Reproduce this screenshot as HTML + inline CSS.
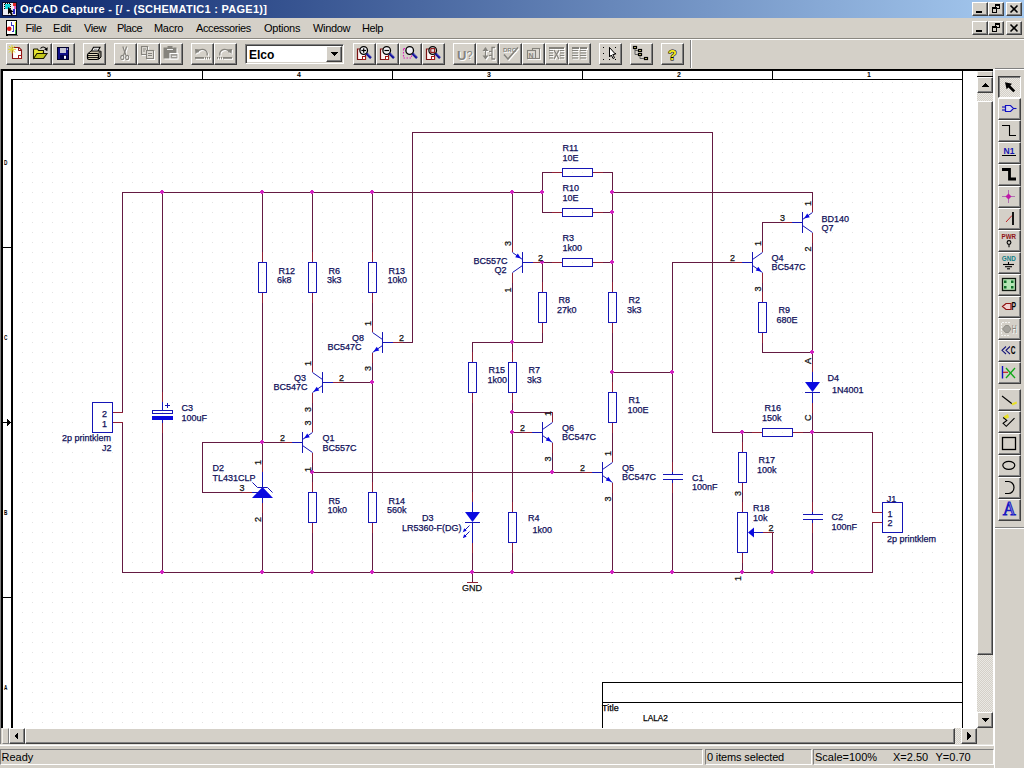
<!DOCTYPE html><html><head><meta charset="utf-8"><title>OrCAD Capture</title><style>
html,body{margin:0;padding:0;}
body{width:1024px;height:768px;overflow:hidden;background:#d4d0c8;position:relative;font-family:"Liberation Sans",sans-serif;font-size:11px;color:#000;}
div{position:absolute;box-sizing:border-box;}
.tb{left:0;top:0;width:1024px;height:18px;background:linear-gradient(to right,#0a246a,#a6caf0);}
.tt{left:20px;top:2px;color:#fff;font-weight:bold;font-size:11px;line-height:14px;white-space:nowrap;letter-spacing:0.28px;}
.mi{top:22px;line-height:13px;font-size:11px;white-space:nowrap;}
.btn{width:23px;height:22px;background:#d4d0c8;border:1px solid;border-color:#fff #404040 #404040 #fff;box-shadow:inset -1px -1px 0 #808080;}
.cb{width:16px;height:14px;background:#d4d0c8;border:1px solid;border-color:#fff #404040 #404040 #fff;box-shadow:inset -1px -1px 0 #808080;}
.sb{width:16px;height:16px;background:#d4d0c8;border:1px solid;border-color:#fff #404040 #404040 #fff;box-shadow:inset -1px -1px 0 #808080;}
.chk{background-color:#eae8e3;background-image:linear-gradient(45deg,#d4d0c8 25%,transparent 25%,transparent 75%,#d4d0c8 75%),linear-gradient(45deg,#d4d0c8 25%,transparent 25%,transparent 75%,#d4d0c8 75%);background-size:2px 2px;background-position:0 0,1px 1px;}
.sp{background:#d4d0c8;border:1px solid;border-color:#f4f2ee #808080 #808080 #f4f2ee;}
svg{position:absolute;left:0;top:0;}
.t{font-family:"Liberation Sans",sans-serif;font-size:9px;stroke-width:0.25px;}
.r{font-family:"Liberation Sans",sans-serif;font-size:7px;font-weight:bold;}
.st{top:750px;height:14px;line-height:14px;font-size:11px;white-space:nowrap;}
</style></head><body>
<div class="tb"></div>
<div class="tt">OrCAD Capture - [/ - (SCHEMATIC1 : PAGE1)]</div>
<div class="cb" style="left:972px;top:2px"></div>
<div class="cb" style="left:988px;top:2px"></div>
<div class="cb" style="left:1006px;top:2px"></div>
<div class="cb" style="left:972px;top:21px"></div>
<div class="cb" style="left:988px;top:21px"></div>
<div class="cb" style="left:1006px;top:21px"></div>
<div class="mi" style="left:25.5px;letter-spacing:-0.4px">File</div>
<div class="mi" style="left:53px;letter-spacing:-0.2px">Edit</div>
<div class="mi" style="left:84px;letter-spacing:-0.4px">View</div>
<div class="mi" style="left:117px;letter-spacing:-0.5px">Place</div>
<div class="mi" style="left:154px;letter-spacing:-0.3px">Macro</div>
<div class="mi" style="left:196px;letter-spacing:-0.4px">Accessories</div>
<div class="mi" style="left:264px;letter-spacing:-0.25px">Options</div>
<div class="mi" style="left:313px;letter-spacing:-0.35px">Window</div>
<div class="mi" style="left:362px;letter-spacing:-0.4px">Help</div>
<div style="left:0;top:38px;width:1024px;height:1px;background:#8a8780"></div>
<div style="left:0;top:39px;width:1024px;height:1px;background:#fff"></div>
<div class="btn" style="left:6px;top:43px"></div>
<div class="btn" style="left:29px;top:43px"></div>
<div class="btn" style="left:52px;top:43px"></div>
<div class="btn" style="left:83px;top:43px"></div>
<div class="btn" style="left:114px;top:43px"></div>
<div class="btn" style="left:137px;top:43px"></div>
<div class="btn" style="left:160px;top:43px"></div>
<div class="btn" style="left:191px;top:43px"></div>
<div class="btn" style="left:214px;top:43px"></div>
<div class="btn" style="left:353px;top:43px"></div>
<div class="btn" style="left:376px;top:43px"></div>
<div class="btn" style="left:399px;top:43px"></div>
<div class="btn" style="left:422px;top:43px"></div>
<div class="btn" style="left:453px;top:43px"></div>
<div class="btn" style="left:476px;top:43px"></div>
<div class="btn" style="left:499px;top:43px"></div>
<div class="btn" style="left:522px;top:43px"></div>
<div class="btn" style="left:545px;top:43px"></div>
<div class="btn" style="left:568px;top:43px"></div>
<div class="btn" style="left:599px;top:43px"></div>
<div class="btn" style="left:630px;top:43px"></div>
<div class="btn" style="left:661px;top:43px"></div>
<div style="left:245px;top:44px;width:99px;height:20px;background:#fff;border:1px solid;border-color:#808080 #fff #fff #808080;box-shadow:inset 1px 1px 0 #404040,inset -1px -1px 0 #d4d0c8"></div>
<div style="left:249px;top:48px;font-weight:bold;font-size:12px;line-height:14px">Elco</div>
<div class="sb" style="left:326px;top:46px"></div>
<div style="left:690px;top:40px;width:1px;height:28px;background:#808080"></div>
<div style="left:691px;top:40px;width:1px;height:28px;background:#fff"></div>
<div style="left:0;top:69px;width:1px;height:676px;background:#808080"></div>
<div style="left:1px;top:69px;width:976px;height:659px;background:#fff"></div>
<div style="left:1px;top:69px;width:992px;height:2px;background:#000"></div>
<div style="left:1px;top:69px;width:2px;height:659px;background:#000"></div>
<div class="chk" style="left:977px;top:71px;width:16px;height:657px"></div>
<div class="sp" style="left:977px;top:71px;width:16px;height:6px"></div>
<div class="sb" style="left:977px;top:77px"></div>
<div class="sb" style="left:977px;top:101px;height:554px"></div>
<div class="sb" style="left:977px;top:712px"></div>
<div class="chk" style="left:2px;top:728px;width:975px;height:16px"></div>
<div class="sp" style="left:2px;top:728px;width:7px;height:16px"></div>
<div class="sb" style="left:9px;top:728px"></div>
<div class="sb" style="left:25px;top:728px;width:930px"></div>
<div class="sb" style="left:961px;top:728px"></div>
<div style="left:977px;top:728px;width:16px;height:16px;background:#d4d0c8"></div>
<div style="left:0px;top:744px;width:994px;height:1px;background:#e4e2dc"></div>
<div style="left:0;top:745px;width:994px;height:1px;background:#fff"></div>
<div style="left:0px;top:749px;width:703px;height:16px;border:1px solid;border-color:#808080 #fff #fff #808080"></div>
<div style="left:705px;top:749px;width:107px;height:16px;border:1px solid;border-color:#808080 #fff #fff #808080"></div>
<div style="left:813px;top:749px;width:181px;height:16px;border:1px solid;border-color:#808080 #fff #fff #808080"></div>
<div class="st" style="left:1.5px">Ready</div>
<div class="st" style="left:707px;letter-spacing:-0.15px">0 items selected</div>
<div class="st" style="left:815px">Scale=100%</div>
<div class="st" style="left:893px">X=2.50</div>
<div class="st" style="left:935.5px">Y=0.70</div>
<div style="left:994px;top:69px;width:1px;height:699px;background:#fff"></div>
<div style="left:993px;top:69px;width:1px;height:677px;background:#fff"></div>
<div style="left:995px;top:68px;width:29px;height:1px;background:#808080"></div>
<div style="left:995px;top:69px;width:29px;height:1px;background:#fff"></div>
<div style="left:977px;top:76px;width:16px;height:1px;background:#000"></div>
<div style="left:995px;top:527px;width:29px;height:1px;background:#808080"></div>
<div style="left:995px;top:528px;width:29px;height:1px;background:#fff"></div>
<div class="btn chk" style="left:998px;top:76px;border-color:#404040 #fff #fff #404040;box-shadow:inset 1px 1px 0 #808080"></div>
<div class="btn" style="left:998px;top:98px"></div>
<div class="btn" style="left:998px;top:120px"></div>
<div class="btn" style="left:998px;top:142px"></div>
<div class="btn" style="left:998px;top:164px"></div>
<div class="btn" style="left:998px;top:186px"></div>
<div class="btn" style="left:998px;top:208px"></div>
<div class="btn" style="left:998px;top:230px"></div>
<div class="btn" style="left:998px;top:252px"></div>
<div class="btn" style="left:998px;top:274px"></div>
<div class="btn" style="left:998px;top:296px"></div>
<div class="btn" style="left:998px;top:318px"></div>
<div class="btn" style="left:998px;top:340px"></div>
<div class="btn" style="left:998px;top:362px"></div>
<div class="btn" style="left:998px;top:389px"></div>
<div class="btn" style="left:998px;top:411px"></div>
<div class="btn" style="left:998px;top:433px"></div>
<div class="btn" style="left:998px;top:455px"></div>
<div class="btn" style="left:998px;top:477px"></div>
<div class="btn" style="left:998px;top:499px"></div>
<svg width="1024" height="768" viewBox="0 0 1024 768" shape-rendering="crispEdges">
<defs><pattern id="g" x="0" y="0" width="10" height="10" patternUnits="userSpaceOnUse"><rect x="2" y="2" width="1" height="1" fill="#e2e2e2"/></pattern></defs>
<rect x="20" y="80" width="940" height="648" fill="url(#g)"/>
<rect x="11" y="79" width="2" height="649" fill="#000"/>
<rect x="11" y="79" width="952" height="1" fill="#000"/>
<rect x="962" y="71" width="1" height="657" fill="#000"/>
<rect x="202" y="71" width="1" height="8" fill="#000"/>
<rect x="392" y="71" width="1" height="8" fill="#000"/>
<rect x="582" y="71" width="1" height="8" fill="#000"/>
<rect x="772" y="71" width="1" height="8" fill="#000"/>
<rect x="3" y="247" width="8" height="1" fill="#000"/>
<rect x="3" y="422" width="8" height="1" fill="#000"/>
<rect x="3" y="597" width="8" height="1" fill="#000"/>
<polygon points="7,419 11,422.5 7,426" fill="#000"/>
<text x="109" y="77" class="r" text-anchor="middle">5</text>
<text x="299" y="77" class="r" text-anchor="middle">4</text>
<text x="489" y="77" class="r" text-anchor="middle">3</text>
<text x="679" y="77" class="r" text-anchor="middle">2</text>
<text x="869" y="77" class="r" text-anchor="middle">1</text>
<text x="5.7" y="165" class="r" text-anchor="middle" style="font-size:6.3px" textLength="3.4" lengthAdjust="spacingAndGlyphs">D</text>
<text x="5.7" y="340" class="r" text-anchor="middle" style="font-size:6.3px" textLength="3.4" lengthAdjust="spacingAndGlyphs">C</text>
<text x="5.7" y="515" class="r" text-anchor="middle" style="font-size:6.3px" textLength="3.4" lengthAdjust="spacingAndGlyphs">B</text>
<text x="5.7" y="690" class="r" text-anchor="middle" style="font-size:6.3px" textLength="3.4" lengthAdjust="spacingAndGlyphs">A</text>
<rect x="602" y="682" width="361" height="1" fill="#000"/>
<rect x="602" y="702" width="361" height="1" fill="#000"/>
<rect x="602" y="682" width="1" height="46" fill="#000"/>
<text x="602" y="711" class="t" fill="#000" stroke="#000">Title</text>
<text x="643" y="721" class="t" fill="#000" stroke="#000" textLength="25" lengthAdjust="spacingAndGlyphs">LALA2</text>
<g shape-rendering="auto">
<rect x="122" y="192" width="1" height="221" fill="#641a42"/>
<rect x="122" y="192" width="421" height="1" fill="#641a42"/>
<rect x="612" y="192" width="201" height="1" fill="#641a42"/>
<rect x="812" y="192" width="1" height="10" fill="#641a42"/>
<rect x="122" y="422" width="1" height="151" fill="#641a42"/>
<rect x="122" y="572" width="751" height="1" fill="#641a42"/>
<rect x="872" y="522" width="1" height="51" fill="#641a42"/>
<rect x="162" y="192" width="1" height="200" fill="#641a42"/>
<rect x="162" y="433" width="1" height="140" fill="#641a42"/>
<rect x="262" y="192" width="1" height="60" fill="#641a42"/>
<rect x="262" y="303" width="1" height="159" fill="#641a42"/>
<rect x="262" y="513" width="1" height="60" fill="#641a42"/>
<rect x="312" y="192" width="1" height="60" fill="#641a42"/>
<rect x="312" y="303" width="1" height="59" fill="#641a42"/>
<rect x="312" y="403" width="1" height="19" fill="#641a42"/>
<rect x="312" y="463" width="1" height="19" fill="#641a42"/>
<rect x="312" y="533" width="1" height="40" fill="#641a42"/>
<rect x="202" y="442" width="1" height="51" fill="#641a42"/>
<rect x="202" y="442" width="80" height="1" fill="#641a42"/>
<rect x="202" y="492" width="40" height="1" fill="#641a42"/>
<rect x="312" y="472" width="270" height="1" fill="#641a42"/>
<rect x="372" y="192" width="1" height="60" fill="#641a42"/>
<rect x="372" y="303" width="1" height="19" fill="#641a42"/>
<rect x="372" y="363" width="1" height="119" fill="#641a42"/>
<rect x="372" y="533" width="1" height="40" fill="#641a42"/>
<rect x="343" y="382" width="30" height="1" fill="#641a42"/>
<rect x="403" y="342" width="10" height="1" fill="#641a42"/>
<rect x="412" y="132" width="1" height="211" fill="#641a42"/>
<rect x="412" y="132" width="301" height="1" fill="#641a42"/>
<rect x="712" y="132" width="1" height="301" fill="#641a42"/>
<rect x="712" y="432" width="40" height="1" fill="#641a42"/>
<rect x="803" y="432" width="70" height="1" fill="#641a42"/>
<rect x="872" y="432" width="1" height="81" fill="#641a42"/>
<rect x="512" y="192" width="1" height="50" fill="#641a42"/>
<rect x="512" y="283" width="1" height="69" fill="#641a42"/>
<rect x="512" y="403" width="1" height="99" fill="#641a42"/>
<rect x="512" y="553" width="1" height="20" fill="#641a42"/>
<rect x="542" y="172" width="1" height="41" fill="#641a42"/>
<rect x="542" y="172" width="10" height="1" fill="#641a42"/>
<rect x="542" y="212" width="10" height="1" fill="#641a42"/>
<rect x="603" y="172" width="10" height="1" fill="#641a42"/>
<rect x="612" y="172" width="1" height="110" fill="#641a42"/>
<rect x="603" y="212" width="10" height="1" fill="#641a42"/>
<rect x="603" y="262" width="10" height="1" fill="#641a42"/>
<rect x="542" y="262" width="10" height="1" fill="#641a42"/>
<rect x="542" y="262" width="1" height="20" fill="#641a42"/>
<rect x="542" y="333" width="1" height="10" fill="#641a42"/>
<rect x="472" y="342" width="71" height="1" fill="#641a42"/>
<rect x="472" y="342" width="1" height="10" fill="#641a42"/>
<rect x="472" y="403" width="1" height="89" fill="#641a42"/>
<rect x="472" y="553" width="1" height="29" fill="#641a42"/>
<rect x="512" y="412" width="41" height="1" fill="#641a42"/>
<rect x="512" y="432" width="10" height="1" fill="#641a42"/>
<rect x="552" y="453" width="1" height="20" fill="#641a42"/>
<rect x="612" y="333" width="1" height="49" fill="#641a42"/>
<rect x="612" y="433" width="1" height="19" fill="#641a42"/>
<rect x="612" y="493" width="1" height="80" fill="#641a42"/>
<rect x="612" y="372" width="61" height="1" fill="#641a42"/>
<rect x="672" y="262" width="1" height="200" fill="#641a42"/>
<rect x="672" y="262" width="60" height="1" fill="#641a42"/>
<rect x="672" y="493" width="1" height="80" fill="#641a42"/>
<rect x="762" y="222" width="1" height="20" fill="#641a42"/>
<rect x="762" y="222" width="20" height="1" fill="#641a42"/>
<rect x="762" y="283" width="1" height="9" fill="#641a42"/>
<rect x="762" y="343" width="1" height="10" fill="#641a42"/>
<rect x="762" y="352" width="51" height="1" fill="#641a42"/>
<rect x="812" y="243" width="1" height="119" fill="#641a42"/>
<rect x="812" y="413" width="1" height="89" fill="#641a42"/>
<rect x="812" y="533" width="1" height="40" fill="#641a42"/>
<rect x="742" y="432" width="1" height="10" fill="#641a42"/>
<rect x="742" y="493" width="1" height="9" fill="#641a42"/>
<rect x="742" y="563" width="1" height="10" fill="#641a42"/>
<rect x="772" y="532" width="2" height="1" fill="#641a42"/>
<rect x="772" y="532" width="1" height="41" fill="#641a42"/>
<rect x="262" y="252" width="1" height="10" fill="#922034"/>
<rect x="262" y="293" width="1" height="10" fill="#922034"/>
<rect x="258.5" y="262.5" width="8" height="30" fill="none" stroke="#1515b6"/>
<rect x="312" y="252" width="1" height="10" fill="#922034"/>
<rect x="312" y="293" width="1" height="10" fill="#922034"/>
<rect x="308.5" y="262.5" width="8" height="30" fill="none" stroke="#1515b6"/>
<rect x="372" y="252" width="1" height="10" fill="#922034"/>
<rect x="372" y="293" width="1" height="10" fill="#922034"/>
<rect x="368.5" y="262.5" width="8" height="30" fill="none" stroke="#1515b6"/>
<rect x="312" y="482" width="1" height="10" fill="#922034"/>
<rect x="312" y="523" width="1" height="10" fill="#922034"/>
<rect x="308.5" y="492.5" width="8" height="30" fill="none" stroke="#1515b6"/>
<rect x="372" y="482" width="1" height="10" fill="#922034"/>
<rect x="372" y="523" width="1" height="10" fill="#922034"/>
<rect x="368.5" y="492.5" width="8" height="30" fill="none" stroke="#1515b6"/>
<rect x="542" y="282" width="1" height="10" fill="#922034"/>
<rect x="542" y="323" width="1" height="10" fill="#922034"/>
<rect x="538.5" y="292.5" width="8" height="30" fill="none" stroke="#1515b6"/>
<rect x="612" y="282" width="1" height="10" fill="#922034"/>
<rect x="612" y="323" width="1" height="10" fill="#922034"/>
<rect x="608.5" y="292.5" width="8" height="30" fill="none" stroke="#1515b6"/>
<rect x="472" y="352" width="1" height="10" fill="#922034"/>
<rect x="472" y="393" width="1" height="10" fill="#922034"/>
<rect x="468.5" y="362.5" width="8" height="30" fill="none" stroke="#1515b6"/>
<rect x="512" y="352" width="1" height="10" fill="#922034"/>
<rect x="512" y="393" width="1" height="10" fill="#922034"/>
<rect x="508.5" y="362.5" width="8" height="30" fill="none" stroke="#1515b6"/>
<rect x="612" y="382" width="1" height="10" fill="#922034"/>
<rect x="612" y="423" width="1" height="10" fill="#922034"/>
<rect x="608.5" y="392.5" width="8" height="30" fill="none" stroke="#1515b6"/>
<rect x="512" y="502" width="1" height="10" fill="#922034"/>
<rect x="512" y="543" width="1" height="10" fill="#922034"/>
<rect x="508.5" y="512.5" width="8" height="30" fill="none" stroke="#1515b6"/>
<rect x="762" y="292" width="1" height="10" fill="#922034"/>
<rect x="762" y="333" width="1" height="10" fill="#922034"/>
<rect x="758.5" y="302.5" width="8" height="30" fill="none" stroke="#1515b6"/>
<rect x="742" y="442" width="1" height="10" fill="#922034"/>
<rect x="742" y="483" width="1" height="10" fill="#922034"/>
<rect x="738.5" y="452.5" width="8" height="30" fill="none" stroke="#1515b6"/>
<rect x="552" y="172" width="10" height="1" fill="#922034"/>
<rect x="593" y="172" width="10" height="1" fill="#922034"/>
<rect x="562.5" y="168.5" width="30" height="8" fill="none" stroke="#1515b6"/>
<rect x="552" y="212" width="10" height="1" fill="#922034"/>
<rect x="593" y="212" width="10" height="1" fill="#922034"/>
<rect x="562.5" y="208.5" width="30" height="8" fill="none" stroke="#1515b6"/>
<rect x="552" y="262" width="10" height="1" fill="#922034"/>
<rect x="593" y="262" width="10" height="1" fill="#922034"/>
<rect x="562.5" y="258.5" width="30" height="8" fill="none" stroke="#1515b6"/>
<rect x="752" y="432" width="10" height="1" fill="#922034"/>
<rect x="793" y="432" width="10" height="1" fill="#922034"/>
<rect x="762.5" y="428.5" width="30" height="8" fill="none" stroke="#1515b6"/>
<rect x="382" y="332" width="1" height="21" fill="#1515b6"/>
<line x1="382.5" y1="339.5" x2="372.5" y2="332.5" stroke="#1515b6" stroke-width="1"/>
<line x1="382.5" y1="345.5" x2="372.5" y2="352.5" stroke="#1515b6" stroke-width="1"/>
<rect x="382" y="342" width="11" height="1" fill="#1515b6"/>
<rect x="393" y="342" width="10" height="1" fill="#922034"/>
<rect x="372" y="322" width="1" height="10" fill="#922034"/>
<rect x="372" y="353" width="1" height="10" fill="#922034"/>
<polygon points="373.5,351.8 376.7,346.8 379.3,350.5" fill="#0a0ae0"/>
<rect x="322" y="372" width="1" height="21" fill="#1515b6"/>
<line x1="322.5" y1="379.5" x2="312.5" y2="372.5" stroke="#1515b6" stroke-width="1"/>
<line x1="322.5" y1="385.5" x2="312.5" y2="392.5" stroke="#1515b6" stroke-width="1"/>
<rect x="322" y="382" width="11" height="1" fill="#1515b6"/>
<rect x="333" y="382" width="10" height="1" fill="#922034"/>
<rect x="312" y="362" width="1" height="10" fill="#922034"/>
<rect x="312" y="393" width="1" height="10" fill="#922034"/>
<polygon points="313.5,391.8 316.7,386.8 319.3,390.5" fill="#0a0ae0"/>
<rect x="302" y="432" width="1" height="21" fill="#1515b6"/>
<line x1="302.5" y1="439.5" x2="312.5" y2="432.5" stroke="#1515b6" stroke-width="1"/>
<line x1="302.5" y1="445.5" x2="312.5" y2="452.5" stroke="#1515b6" stroke-width="1"/>
<rect x="292" y="442" width="11" height="1" fill="#1515b6"/>
<rect x="282" y="442" width="10" height="1" fill="#922034"/>
<rect x="312" y="422" width="1" height="10" fill="#922034"/>
<rect x="312" y="453" width="1" height="10" fill="#922034"/>
<polygon points="304.0,438.5 307.2,433.5 309.8,437.2" fill="#0a0ae0"/>
<rect x="522" y="252" width="1" height="21" fill="#1515b6"/>
<line x1="522.5" y1="259.5" x2="512.5" y2="252.5" stroke="#1515b6" stroke-width="1"/>
<line x1="522.5" y1="265.5" x2="512.5" y2="272.5" stroke="#1515b6" stroke-width="1"/>
<rect x="522" y="262" width="11" height="1" fill="#1515b6"/>
<rect x="533" y="262" width="10" height="1" fill="#922034"/>
<rect x="512" y="242" width="1" height="10" fill="#922034"/>
<rect x="512" y="273" width="1" height="10" fill="#922034"/>
<polygon points="521.0,258.5 515.2,257.2 517.8,253.5" fill="#0a0ae0"/>
<rect x="542" y="422" width="1" height="21" fill="#1515b6"/>
<line x1="542.5" y1="429.5" x2="552.5" y2="422.5" stroke="#1515b6" stroke-width="1"/>
<line x1="542.5" y1="435.5" x2="552.5" y2="442.5" stroke="#1515b6" stroke-width="1"/>
<rect x="532" y="432" width="11" height="1" fill="#1515b6"/>
<rect x="522" y="432" width="10" height="1" fill="#922034"/>
<rect x="552" y="412" width="1" height="10" fill="#922034"/>
<rect x="552" y="443" width="1" height="10" fill="#922034"/>
<polygon points="551.5,441.8 545.7,440.5 548.3,436.8" fill="#0a0ae0"/>
<rect x="602" y="462" width="1" height="21" fill="#1515b6"/>
<line x1="602.5" y1="469.5" x2="612.5" y2="462.5" stroke="#1515b6" stroke-width="1"/>
<line x1="602.5" y1="475.5" x2="612.5" y2="482.5" stroke="#1515b6" stroke-width="1"/>
<rect x="592" y="472" width="11" height="1" fill="#1515b6"/>
<rect x="582" y="472" width="10" height="1" fill="#922034"/>
<rect x="612" y="452" width="1" height="10" fill="#922034"/>
<rect x="612" y="483" width="1" height="10" fill="#922034"/>
<polygon points="611.5,481.8 605.7,480.5 608.3,476.8" fill="#0a0ae0"/>
<rect x="752" y="252" width="1" height="21" fill="#1515b6"/>
<line x1="752.5" y1="259.5" x2="762.5" y2="252.5" stroke="#1515b6" stroke-width="1"/>
<line x1="752.5" y1="265.5" x2="762.5" y2="272.5" stroke="#1515b6" stroke-width="1"/>
<rect x="742" y="262" width="11" height="1" fill="#1515b6"/>
<rect x="732" y="262" width="10" height="1" fill="#922034"/>
<rect x="762" y="242" width="1" height="10" fill="#922034"/>
<rect x="762" y="273" width="1" height="10" fill="#922034"/>
<polygon points="761.5,271.8 755.7,270.5 758.3,266.8" fill="#0a0ae0"/>
<rect x="802" y="212" width="1" height="21" fill="#1515b6"/>
<line x1="802.5" y1="219.5" x2="812.5" y2="212.5" stroke="#1515b6" stroke-width="1"/>
<line x1="802.5" y1="225.5" x2="812.5" y2="232.5" stroke="#1515b6" stroke-width="1"/>
<rect x="792" y="222" width="11" height="1" fill="#1515b6"/>
<rect x="782" y="222" width="10" height="1" fill="#922034"/>
<rect x="812" y="202" width="1" height="10" fill="#922034"/>
<rect x="812" y="233" width="1" height="10" fill="#922034"/>
<polygon points="804.0,218.5 807.2,213.5 809.8,217.2" fill="#0a0ae0"/>
<rect x="92.5" y="402.5" width="20" height="30" fill="none" stroke="#1515b6"/>
<rect x="113" y="412" width="10" height="1" fill="#922034"/>
<rect x="113" y="422" width="10" height="1" fill="#922034"/>
<rect x="882.5" y="502.5" width="20" height="30" fill="none" stroke="#1515b6"/>
<rect x="872" y="512" width="10" height="1" fill="#922034"/>
<rect x="872" y="522" width="10" height="1" fill="#922034"/>
<rect x="162" y="392" width="1" height="10" fill="#922034"/>
<rect x="162" y="402" width="1" height="8" fill="#1515b6"/>
<rect x="152.5" y="410.5" width="20" height="3" fill="none" stroke="#1515b6"/>
<rect x="152" y="416" width="21" height="4" fill="#0a0ae0"/>
<rect x="162" y="420" width="1" height="3" fill="#1515b6"/>
<rect x="162" y="423" width="1" height="10" fill="#922034"/>
<rect x="165" y="405" width="5" height="1" fill="#1515b6"/>
<rect x="167" y="403" width="1" height="5" fill="#1515b6"/>
<rect x="672" y="462" width="1" height="10" fill="#922034"/>
<rect x="672" y="472" width="1" height="3" fill="#1515b6"/>
<rect x="663" y="474" width="20" height="1" fill="#1515b6"/>
<rect x="663" y="479" width="20" height="1" fill="#1515b6"/>
<rect x="672" y="479" width="1" height="4" fill="#1515b6"/>
<rect x="672" y="483" width="1" height="10" fill="#922034"/>
<rect x="812" y="502" width="1" height="10" fill="#922034"/>
<rect x="812" y="512" width="1" height="3" fill="#1515b6"/>
<rect x="803" y="514" width="20" height="1" fill="#1515b6"/>
<rect x="803" y="519" width="20" height="1" fill="#1515b6"/>
<rect x="812" y="519" width="1" height="4" fill="#1515b6"/>
<rect x="812" y="523" width="1" height="10" fill="#922034"/>
<rect x="812" y="362" width="1" height="10" fill="#922034"/>
<rect x="812" y="372" width="1" height="11" fill="#1515b6"/>
<polygon points="805,382 820,382 812.5,392" fill="#0a0ae0"/>
<rect x="805" y="392" width="15" height="1" fill="#1515b6"/>
<rect x="812" y="392" width="1" height="11" fill="#1515b6"/>
<rect x="812" y="403" width="1" height="10" fill="#922034"/>
<rect x="472" y="492" width="1" height="10" fill="#922034"/>
<rect x="472" y="502" width="1" height="11" fill="#1515b6"/>
<polygon points="465,512 480,512 472.5,522" fill="#0a0ae0"/>
<rect x="465" y="522" width="15" height="1" fill="#1515b6"/>
<rect x="472" y="522" width="1" height="21" fill="#1515b6"/>
<rect x="472" y="543" width="1" height="10" fill="#922034"/>
<line x1="469.5" y1="525.5" x2="463.5" y2="531.5" stroke="#1515b6" stroke-width="1"/>
<polygon points="463.0,532.0 464.2,528.3 466.7,530.8" fill="#0a0ae0"/>
<line x1="469.5" y1="531.5" x2="463.5" y2="537.5" stroke="#1515b6" stroke-width="1"/>
<polygon points="463.0,538.0 464.2,534.3 466.7,536.8" fill="#0a0ae0"/>
<rect x="467" y="582" width="11" height="1" fill="#922034"/>
<rect x="262" y="462" width="1" height="10" fill="#922034"/>
<rect x="262" y="472" width="1" height="16" fill="#1515b6"/>
<polygon points="252,498 273,498 262.5,487" fill="#0a0ae0"/>
<polyline points="252.5,482.5 257.5,487.5 267.5,487.5 272.5,492.5" fill="none" stroke="#1515b6"/>
<rect x="262" y="498" width="1" height="5" fill="#1515b6"/>
<rect x="262" y="503" width="1" height="10" fill="#922034"/>
<rect x="242" y="492" width="10" height="1" fill="#922034"/>
<rect x="252" y="492" width="6" height="1" fill="#1515b6"/>
<rect x="742" y="502" width="1" height="10" fill="#922034"/>
<rect x="742" y="553" width="1" height="10" fill="#922034"/>
<rect x="737.5" y="512.5" width="10" height="40" fill="none" stroke="#1515b6"/>
<polygon points="748,532.5 754,527.5 754,537.5" fill="#0a0ae0"/>
<rect x="754" y="532" width="9" height="1" fill="#1515b6"/>
<rect x="763" y="532" width="10" height="1" fill="#922034"/>
<rect x="161" y="190" width="2" height="4" fill="#d220c0"/><rect x="160" y="191" width="4" height="2" fill="#d220c0"/>
<rect x="261" y="190" width="2" height="4" fill="#d220c0"/><rect x="260" y="191" width="4" height="2" fill="#d220c0"/>
<rect x="311" y="190" width="2" height="4" fill="#d220c0"/><rect x="310" y="191" width="4" height="2" fill="#d220c0"/>
<rect x="371" y="190" width="2" height="4" fill="#d220c0"/><rect x="370" y="191" width="4" height="2" fill="#d220c0"/>
<rect x="511" y="190" width="2" height="4" fill="#d220c0"/><rect x="510" y="191" width="4" height="2" fill="#d220c0"/>
<rect x="541" y="190" width="2" height="4" fill="#d220c0"/><rect x="540" y="191" width="4" height="2" fill="#d220c0"/>
<rect x="611" y="190" width="2" height="4" fill="#d220c0"/><rect x="610" y="191" width="4" height="2" fill="#d220c0"/>
<rect x="611" y="210" width="2" height="4" fill="#d220c0"/><rect x="610" y="211" width="4" height="2" fill="#d220c0"/>
<rect x="541" y="260" width="2" height="4" fill="#d220c0"/><rect x="540" y="261" width="4" height="2" fill="#d220c0"/>
<rect x="611" y="260" width="2" height="4" fill="#d220c0"/><rect x="610" y="261" width="4" height="2" fill="#d220c0"/>
<rect x="511" y="340" width="2" height="4" fill="#d220c0"/><rect x="510" y="341" width="4" height="2" fill="#d220c0"/>
<rect x="371" y="380" width="2" height="4" fill="#d220c0"/><rect x="370" y="381" width="4" height="2" fill="#d220c0"/>
<rect x="611" y="370" width="2" height="4" fill="#d220c0"/><rect x="610" y="371" width="4" height="2" fill="#d220c0"/>
<rect x="671" y="370" width="2" height="4" fill="#d220c0"/><rect x="670" y="371" width="4" height="2" fill="#d220c0"/>
<rect x="511" y="410" width="2" height="4" fill="#d220c0"/><rect x="510" y="411" width="4" height="2" fill="#d220c0"/>
<rect x="511" y="430" width="2" height="4" fill="#d220c0"/><rect x="510" y="431" width="4" height="2" fill="#d220c0"/>
<rect x="261" y="440" width="2" height="4" fill="#d220c0"/><rect x="260" y="441" width="4" height="2" fill="#d220c0"/>
<rect x="311" y="470" width="2" height="4" fill="#d220c0"/><rect x="310" y="471" width="4" height="2" fill="#d220c0"/>
<rect x="551" y="470" width="2" height="4" fill="#d220c0"/><rect x="550" y="471" width="4" height="2" fill="#d220c0"/>
<rect x="811" y="350" width="2" height="4" fill="#d220c0"/><rect x="810" y="351" width="4" height="2" fill="#d220c0"/>
<rect x="741" y="430" width="2" height="4" fill="#d220c0"/><rect x="740" y="431" width="4" height="2" fill="#d220c0"/>
<rect x="811" y="430" width="2" height="4" fill="#d220c0"/><rect x="810" y="431" width="4" height="2" fill="#d220c0"/>
<rect x="161" y="570" width="2" height="4" fill="#d220c0"/><rect x="160" y="571" width="4" height="2" fill="#d220c0"/>
<rect x="261" y="570" width="2" height="4" fill="#d220c0"/><rect x="260" y="571" width="4" height="2" fill="#d220c0"/>
<rect x="311" y="570" width="2" height="4" fill="#d220c0"/><rect x="310" y="571" width="4" height="2" fill="#d220c0"/>
<rect x="371" y="570" width="2" height="4" fill="#d220c0"/><rect x="370" y="571" width="4" height="2" fill="#d220c0"/>
<rect x="471" y="570" width="2" height="4" fill="#d220c0"/><rect x="470" y="571" width="4" height="2" fill="#d220c0"/>
<rect x="511" y="570" width="2" height="4" fill="#d220c0"/><rect x="510" y="571" width="4" height="2" fill="#d220c0"/>
<rect x="611" y="570" width="2" height="4" fill="#d220c0"/><rect x="610" y="571" width="4" height="2" fill="#d220c0"/>
<rect x="671" y="570" width="2" height="4" fill="#d220c0"/><rect x="670" y="571" width="4" height="2" fill="#d220c0"/>
<rect x="741" y="570" width="2" height="4" fill="#d220c0"/><rect x="740" y="571" width="4" height="2" fill="#d220c0"/>
<rect x="771" y="570" width="2" height="4" fill="#d220c0"/><rect x="770" y="571" width="4" height="2" fill="#d220c0"/>
<rect x="811" y="570" width="2" height="4" fill="#d220c0"/><rect x="810" y="571" width="4" height="2" fill="#d220c0"/>
<text x="278.5" y="274" fill="#10105a" stroke="#10105a" class="t">R12</text>
<text x="277" y="283" fill="#10105a" stroke="#10105a" class="t">6k8</text>
<text x="328.5" y="274" fill="#10105a" stroke="#10105a" class="t">R6</text>
<text x="327" y="283" fill="#10105a" stroke="#10105a" class="t">3k3</text>
<text x="388.5" y="274" fill="#10105a" stroke="#10105a" class="t">R13</text>
<text x="387.5" y="283" fill="#10105a" stroke="#10105a" class="t">10k0</text>
<text x="352" y="340.5" fill="#10105a" stroke="#10105a" class="t">Q8</text>
<text x="327.5" y="349.5" fill="#10105a" stroke="#10105a" class="t">BC547C</text>
<text x="294" y="380.5" fill="#10105a" stroke="#10105a" class="t">Q3</text>
<text x="273.5" y="389.5" fill="#10105a" stroke="#10105a" class="t">BC547C</text>
<text x="562.5" y="150.5" fill="#10105a" stroke="#10105a" class="t">R11</text>
<text x="562.5" y="160.5" fill="#10105a" stroke="#10105a" class="t">10E</text>
<text x="562.5" y="190.5" fill="#10105a" stroke="#10105a" class="t">R10</text>
<text x="562.5" y="200.5" fill="#10105a" stroke="#10105a" class="t">10E</text>
<text x="562.5" y="240.5" fill="#10105a" stroke="#10105a" class="t">R3</text>
<text x="562.5" y="250.5" fill="#10105a" stroke="#10105a" class="t">1k00</text>
<text x="473.5" y="264" fill="#10105a" stroke="#10105a" class="t">BC557C</text>
<text x="494.5" y="272.5" fill="#10105a" stroke="#10105a" class="t">Q2</text>
<text x="558.5" y="303" fill="#10105a" stroke="#10105a" class="t">R8</text>
<text x="557" y="312.5" fill="#10105a" stroke="#10105a" class="t">27k0</text>
<text x="628.5" y="303" fill="#10105a" stroke="#10105a" class="t">R2</text>
<text x="627" y="312.5" fill="#10105a" stroke="#10105a" class="t">3k3</text>
<text x="488.5" y="373" fill="#10105a" stroke="#10105a" class="t">R15</text>
<text x="487.5" y="382.5" fill="#10105a" stroke="#10105a" class="t">1k00</text>
<text x="528.5" y="373" fill="#10105a" stroke="#10105a" class="t">R7</text>
<text x="527" y="382.5" fill="#10105a" stroke="#10105a" class="t">3k3</text>
<text x="628.5" y="403" fill="#10105a" stroke="#10105a" class="t">R1</text>
<text x="627.5" y="413" fill="#10105a" stroke="#10105a" class="t">100E</text>
<text x="562" y="430.5" fill="#10105a" stroke="#10105a" class="t">Q6</text>
<text x="562" y="439.5" fill="#10105a" stroke="#10105a" class="t">BC547C</text>
<text x="622" y="470.5" fill="#10105a" stroke="#10105a" class="t">Q5</text>
<text x="622" y="479.5" fill="#10105a" stroke="#10105a" class="t">BC547C</text>
<text x="692" y="480.5" fill="#10105a" stroke="#10105a" class="t">C1</text>
<text x="692" y="490" fill="#10105a" stroke="#10105a" class="t">100nF</text>
<text x="528" y="520.5" fill="#10105a" stroke="#10105a" class="t">R4</text>
<text x="532.5" y="532.5" fill="#10105a" stroke="#10105a" class="t">1k00</text>
<text x="422" y="520.5" fill="#10105a" stroke="#10105a" class="t">D3</text>
<text x="402" y="531" fill="#10105a" stroke="#10105a" class="t">LR5360-F(DG)</text>
<text x="328.5" y="503.5" fill="#10105a" stroke="#10105a" class="t">R5</text>
<text x="327.5" y="513" fill="#10105a" stroke="#10105a" class="t">10k0</text>
<text x="388.5" y="503.5" fill="#10105a" stroke="#10105a" class="t">R14</text>
<text x="387" y="513" fill="#10105a" stroke="#10105a" class="t">560k</text>
<text x="322.5" y="440.5" fill="#10105a" stroke="#10105a" class="t">Q1</text>
<text x="322.5" y="450.5" fill="#10105a" stroke="#10105a" class="t">BC557C</text>
<text x="212.5" y="470.5" fill="#10105a" stroke="#10105a" class="t">D2</text>
<text x="212.5" y="480.5" fill="#10105a" stroke="#10105a" class="t">TL431CLP</text>
<text x="181.5" y="411" fill="#10105a" stroke="#10105a" class="t">C3</text>
<text x="181.5" y="420.5" fill="#10105a" stroke="#10105a" class="t">100uF</text>
<text x="62" y="441" fill="#10105a" stroke="#10105a" class="t">2p printklem</text>
<text x="102" y="451" fill="#10105a" stroke="#10105a" class="t">J2</text>
<text x="821.5" y="222" fill="#10105a" stroke="#10105a" class="t">BD140</text>
<text x="821.5" y="230.5" fill="#10105a" stroke="#10105a" class="t">Q7</text>
<text x="771.5" y="260.5" fill="#10105a" stroke="#10105a" class="t">Q4</text>
<text x="771.5" y="269.5" fill="#10105a" stroke="#10105a" class="t">BC547C</text>
<text x="778.5" y="313" fill="#10105a" stroke="#10105a" class="t">R9</text>
<text x="776.5" y="322.5" fill="#10105a" stroke="#10105a" class="t">680E</text>
<text x="827.5" y="380.5" fill="#10105a" stroke="#10105a" class="t">D4</text>
<text x="832" y="393" fill="#10105a" stroke="#10105a" class="t">1N4001</text>
<text x="764.5" y="410.5" fill="#10105a" stroke="#10105a" class="t">R16</text>
<text x="762" y="420.5" fill="#10105a" stroke="#10105a" class="t">150k</text>
<text x="758.5" y="463" fill="#10105a" stroke="#10105a" class="t">R17</text>
<text x="757" y="472.5" fill="#10105a" stroke="#10105a" class="t">100k</text>
<text x="753" y="510.5" fill="#10105a" stroke="#10105a" class="t">R18</text>
<text x="753" y="520.5" fill="#10105a" stroke="#10105a" class="t">10k</text>
<text x="831.5" y="520" fill="#10105a" stroke="#10105a" class="t">C2</text>
<text x="831.5" y="529.5" fill="#10105a" stroke="#10105a" class="t">100nF</text>
<text x="886.8" y="502" fill="#10105a" stroke="#10105a" class="t">J1</text>
<text x="887" y="542" fill="#10105a" stroke="#10105a" class="t">2p printklem</text>
<text x="887.5" y="516.5" fill="#10105a" stroke="#10105a" class="t">1</text>
<text x="887.5" y="526" fill="#10105a" stroke="#10105a" class="t">2</text>
<text x="102" y="416.5" fill="#10105a" stroke="#10105a" class="t">2</text>
<text x="102" y="426.5" fill="#10105a" stroke="#10105a" class="t">1</text>
<text x="462" y="590.5" fill="#101010" stroke="#101010" class="t">GND</text>
<text x="399" y="340.5" fill="#101010" stroke="#101010" class="t">2</text>
<text x="339" y="380.5" fill="#101010" stroke="#101010" class="t">2</text>
<text x="280" y="440.5" fill="#101010" stroke="#101010" class="t">2</text>
<text x="538" y="260.5" fill="#101010" stroke="#101010" class="t">2</text>
<text x="520" y="430.5" fill="#101010" stroke="#101010" class="t">2</text>
<text x="580" y="470.5" fill="#101010" stroke="#101010" class="t">2</text>
<text x="730" y="260.5" fill="#101010" stroke="#101010" class="t">2</text>
<text x="780" y="220.5" fill="#101010" stroke="#101010" class="t">3</text>
<text x="768.5" y="530.5" fill="#101010" stroke="#101010" class="t">2</text>
<text transform="translate(371,326) rotate(-90)" fill="#101010" stroke="#101010" class="t">1</text>
<text transform="translate(371,371) rotate(-90)" fill="#101010" stroke="#101010" class="t">3</text>
<text transform="translate(311,366) rotate(-90)" fill="#101010" stroke="#101010" class="t">1</text>
<text transform="translate(311,412) rotate(-90)" fill="#101010" stroke="#101010" class="t">3</text>
<text transform="translate(311,425.5) rotate(-90)" fill="#101010" stroke="#101010" class="t">3</text>
<text transform="translate(311,472) rotate(-90)" fill="#101010" stroke="#101010" class="t">1</text>
<text transform="translate(261,465) rotate(-90)" fill="#101010" stroke="#101010" class="t">1</text>
<text transform="translate(261,522) rotate(-90)" fill="#101010" stroke="#101010" class="t">2</text>
<text transform="translate(511,246) rotate(-90)" fill="#101010" stroke="#101010" class="t">3</text>
<text transform="translate(511,292.5) rotate(-90)" fill="#101010" stroke="#101010" class="t">1</text>
<text transform="translate(551,416) rotate(-90)" fill="#101010" stroke="#101010" class="t">1</text>
<text transform="translate(551,461.5) rotate(-90)" fill="#101010" stroke="#101010" class="t">3</text>
<text transform="translate(611,456) rotate(-90)" fill="#101010" stroke="#101010" class="t">1</text>
<text transform="translate(611,501.5) rotate(-90)" fill="#101010" stroke="#101010" class="t">3</text>
<text transform="translate(761,246) rotate(-90)" fill="#101010" stroke="#101010" class="t">1</text>
<text transform="translate(761,291.5) rotate(-90)" fill="#101010" stroke="#101010" class="t">3</text>
<text transform="translate(811,206) rotate(-90)" fill="#101010" stroke="#101010" class="t">1</text>
<text transform="translate(811,251.5) rotate(-90)" fill="#101010" stroke="#101010" class="t">2</text>
<text transform="translate(741,496) rotate(-90)" fill="#101010" stroke="#101010" class="t">3</text>
<text transform="translate(741,581) rotate(-90)" fill="#101010" stroke="#101010" class="t">1</text>
<text transform="translate(811,364) rotate(-90)" fill="#101010" stroke="#101010" class="t">A</text>
<text transform="translate(811,421) rotate(-90)" fill="#101010" stroke="#101010" class="t">C</text>
<text x="239.5" y="490.5" fill="#101010" stroke="#101010" class="t">3</text>
</g>
<rect x="976" y="11" width="6" height="2" fill="#000"/>
<rect x="995.5" y="4.5" width="4" height="4" fill="none" stroke="#000" stroke-width="1"/>
<rect x="995" y="4" width="5" height="2" fill="#000"/>
<rect x="992" y="7" width="5" height="6" fill="#d4d0c8"/>
<rect x="992.5" y="7.5" width="4" height="5" fill="none" stroke="#000" stroke-width="1"/>
<rect x="992" y="7" width="5" height="2" fill="#000"/>
<g shape-rendering="auto" stroke="#000" stroke-width="1.6"><line x1="1010.5" y1="5.5" x2="1017.5" y2="12.5"/><line x1="1017.5" y1="5.5" x2="1010.5" y2="12.5"/></g>
<rect x="976" y="30" width="6" height="2" fill="#000"/>
<rect x="995.5" y="23.5" width="4" height="4" fill="none" stroke="#000" stroke-width="1"/>
<rect x="995" y="23" width="5" height="2" fill="#000"/>
<rect x="992" y="26" width="5" height="6" fill="#d4d0c8"/>
<rect x="992.5" y="26.5" width="4" height="5" fill="none" stroke="#000" stroke-width="1"/>
<rect x="992" y="26" width="5" height="2" fill="#000"/>
<g shape-rendering="auto" stroke="#000" stroke-width="1.6"><line x1="1010.5" y1="24.5" x2="1017.5" y2="31.5"/><line x1="1017.5" y1="24.5" x2="1010.5" y2="31.5"/></g>
<rect x="2" y="2" width="15" height="14" fill="#0c0c28"/>
<rect x="3" y="3" width="13" height="12" fill="#ececf4"/>
<rect x="5" y="4" width="5" height="5" fill="#18d4d8"/>
<rect x="4" y="4" width="1" height="1" fill="#000"/>
<rect x="5" y="3" width="1" height="1" fill="#000"/>
<rect x="10" y="4" width="1" height="1" fill="#000"/>
<rect x="4" y="6" width="1" height="1" fill="#000"/>
<rect x="7" y="3" width="1" height="1" fill="#000"/>
<rect x="10" y="6" width="1" height="1" fill="#000"/>
<rect x="4" y="8" width="1" height="1" fill="#000"/>
<rect x="9" y="3" width="1" height="1" fill="#000"/>
<rect x="10" y="8" width="1" height="1" fill="#000"/>
<rect x="12.5" y="3" width="3.5" height="2.5" fill="#e02828"/>
<rect x="14" y="6" width="2" height="2.5" fill="#f060c0"/>
<rect x="13" y="9" width="1.5" height="5" fill="#3030d0"/>
<g shape-rendering="auto">
<polygon points="8,7 8,14.5 9.8,12.8 11.2,15.2 12.8,14.4 11.5,12 13.8,12" fill="#000"/>
</g>
<rect x="6" y="20" width="11" height="15.5" fill="#000"/>
<rect x="8" y="35" width="10" height="1" fill="#606060"/>
<rect x="7" y="21" width="9.3" height="12.8" fill="#fff"/>
<circle cx="9.2" cy="28.8" r="2.3" fill="#e01818" shape-rendering="auto"/>
<polyline points="11.5,22 11.5,25.5 13.5,25.5 13.5,31.5 11.5,31.5" fill="none" stroke="#3838c8" stroke-width="1"/>
<rect x="14.5" y="22" width="1.8" height="4" fill="#e8e020"/>
<rect x="14.5" y="26" width="1.8" height="4" fill="#a4d840"/>
<rect x="14.5" y="30" width="1.8" height="3.5" fill="#30b048"/>
<polygon points="981,87 989,87 985,83" fill="#000"/>
<polygon points="981,718 989,718 985,722" fill="#000"/>
<polygon points="18,732 18,740 14,736" fill="#000"/>
<polygon points="967,732 967,740 971,736" fill="#000"/>
<polygon points="330,52 338,52 334,56" fill="#000"/>
<g shape-rendering="auto">
<polygon points="12.5,47.5 19,47.5 21.5,50 21.5,58.5 12.5,58.5" fill="#fff"/>
<polyline points="12.5,47.5 19,47.5 21.5,50 21.5,58.5 12.5,58.5 12.5,47.5" fill="none" stroke="#8c1414" stroke-width="1.1"/>
<polyline points="18.5,47.5 18.5,50.5 21.5,50.5" fill="none" stroke="#8c1414" stroke-width="1"/>
<rect x="18.5" y="55.5" width="3" height="3" fill="#fff" stroke="#a01818" stroke-width="1"/>
<polyline points="9,46 15,52.5" fill="none" stroke="#e0d828" stroke-width="1"/>
<polyline points="15,46 9,52.5" fill="none" stroke="#e0d828" stroke-width="1"/>
<polyline points="12,45 12,53.5" fill="none" stroke="#e0d828" stroke-width="1"/>
<polyline points="8,49.3 16,49.3" fill="none" stroke="#e0d828" stroke-width="1"/>
<polygon points="33.5,49 37.5,49 38.5,50.5 43.5,50.5 43.5,58.5 33.5,58.5" fill="#e6e630"/>
<polyline points="33.5,49 37.5,49 38.5,50.5 43.5,50.5 43.5,53 33.5,58.5 33.5,49" fill="none" stroke="#181800" stroke-width="1.1"/>
<polygon points="33.5,58.5 37,53.5 47,53.5 43.5,58.5" fill="#c4c81c"/>
<polyline points="33.5,58.5 37,53.5 47,53.5 43.5,58.5 33.5,58.5" fill="none" stroke="#181800" stroke-width="1.1"/>
<path d="M40.5 48.5 q2.5 -3 5.5 0" fill="none" stroke="#000" stroke-width="1.1"/>
<polygon points="44.2,49.3 47.8,47.2 47.3,51.3" fill="#000"/>
<rect x="57.5" y="47" width="11.5" height="12.5" fill="#101088"/>
<rect x="57.5" y="47.5" width="11" height="12" fill="none" stroke="#00002a" stroke-width="1"/>
<rect x="60" y="48" width="6" height="5" fill="#c6c6d6"/>
<rect x="66.8" y="48.3" width="1" height="1.7" fill="#d8d8e8"/>
<rect x="60" y="55" width="7.5" height="4" fill="#00004a"/>
<rect x="64" y="55.8" width="2" height="3" fill="#fff"/>
<polygon points="91.5,51 93.5,47.2 100,47.2 98,51" fill="#fff"/>
<polyline points="91.5,51 93.5,47.2 100,47.2 98,51" fill="none" stroke="#000" stroke-width="1.1"/>
<polyline points="94,49.2 97.5,49.2" fill="none" stroke="#606060" stroke-width="0.8"/>
<polygon points="88,53.5 91,51 100.5,51 98.5,53.5" fill="#c8c0a8"/>
<polyline points="88,53.5 91,51 100.5,51 98.5,53.5" fill="none" stroke="#000" stroke-width="1"/>
<polygon points="98.5,53.5 101,51.2 101,57 98.5,59.5" fill="#908c80"/>
<polyline points="101,51.2 101,57 98.5,59.5" fill="none" stroke="#000" stroke-width="1"/>
<rect x="87.5" y="53.5" width="11" height="6" rx="1.5" fill="#ece2c4" stroke="#000" stroke-width="1.2"/>
<polyline points="88,55.6 98,55.6" fill="none" stroke="#000" stroke-width="1"/>
<polyline points="88,57.6 98,57.6" fill="none" stroke="#000" stroke-width="1"/>
<g transform="translate(1,1)">
<polyline points="122.8,46.5 126,55.5" fill="none" stroke="#ffffff" stroke-width="1.2"/>
<polyline points="126.7,46.5 123.5,55.5" fill="none" stroke="#ffffff" stroke-width="1.2"/>
<ellipse cx="122.3" cy="57.5" rx="1.6" ry="2.1" fill="none" stroke="#ffffff" stroke-width="1.1"/><ellipse cx="127.2" cy="57.5" rx="1.6" ry="2.1" fill="none" stroke="#ffffff" stroke-width="1.1"/>
<rect x="141.5" y="46.5" width="6" height="8" fill="none" stroke="#ffffff" stroke-width="1.1"/>
<rect x="146.5" y="50.5" width="7" height="8" fill="none" stroke="#ffffff" stroke-width="1.1"/>
<polyline points="143,49 146,49" fill="none" stroke="#ffffff" stroke-width="1"/>
<polyline points="143,51 145,51" fill="none" stroke="#ffffff" stroke-width="1"/>
<polyline points="148,53.5 152,53.5" fill="none" stroke="#ffffff" stroke-width="1"/>
<polyline points="148,55.5 152,55.5" fill="none" stroke="#ffffff" stroke-width="1"/>
<rect x="163.5" y="47.5" width="13" height="11" fill="#ffffff"/>
<rect x="167.5" y="46" width="5" height="2.5" fill="#ffffff"/>
<path d="M197.5 52.5 A5 4.5 0 1 1 207 55.5" fill="none" stroke="#ffffff" stroke-width="1.3"/>
<polygon points="195,49 200,49.5 195.5,54" fill="#ffffff"/>
<rect x="195" y="57" width="9" height="1.8" fill="#ffffff"/>
<rect x="205" y="57" width="1" height="1.8" fill="#ffffff"/>
<rect x="207" y="57" width="1" height="1.8" fill="#ffffff"/>
<rect x="209" y="57" width="1" height="1.8" fill="#ffffff"/>
<path d="M229.5 52.5 A5 4.5 0 1 0 220 55.5" fill="none" stroke="#ffffff" stroke-width="1.3"/>
<polygon points="232,49 227,49.5 231.5,54" fill="#ffffff"/>
<rect x="223" y="57" width="9" height="1.8" fill="#ffffff"/>
<rect x="217" y="57" width="1" height="1.8" fill="#ffffff"/>
<rect x="219" y="57" width="1" height="1.8" fill="#ffffff"/>
<rect x="221" y="57" width="1" height="1.8" fill="#ffffff"/>
<text x="457" y="59.5" font-family="Liberation Sans,sans-serif" font-weight="bold" font-size="13px" fill="#ffffff">U</text>
<text x="466.5" y="58.5" font-family="Liberation Sans,sans-serif" font-size="11px" fill="#ffffff">?</text>
<polyline points="485.5,48 485.5,58.5" fill="none" stroke="#ffffff" stroke-width="1.2"/>
<polygon points="482.5,51 485.5,47 488.5,51" fill="#ffffff"/>
<polygon points="482.5,55.5 485.5,59.5 488.5,55.5" fill="#ffffff"/>
<polyline points="495,47.5 492,47.5 492,59 495,59" fill="none" stroke="#ffffff" stroke-width="1.3"/>
<polyline points="489,51.5 492,51.5" fill="none" stroke="#ffffff" stroke-width="1.2"/>
<polyline points="489,55.5 492,55.5" fill="none" stroke="#ffffff" stroke-width="1.2"/>
<text x="503" y="51.5" font-family="Liberation Sans,sans-serif" font-weight="bold" font-size="6px" fill="#ffffff">DRC</text>
<polyline points="504,54.5 508,59 518,47.5" fill="none" stroke="#ffffff" stroke-width="1.6"/>
<rect x="532.5" y="48.5" width="7" height="10" fill="none" stroke="#ffffff" stroke-width="1.1"/>
<rect x="527.5" y="50.5" width="8" height="8" fill="none" stroke="#ffffff" stroke-width="1.1"/>
<text x="528.5" y="57.5" font-family="Liberation Sans,sans-serif" font-weight="bold" font-size="7px" fill="#ffffff">N</text>
<polyline points="549,50.5 553,50.5" fill="none" stroke="#ffffff" stroke-width="1.1"/>
<polyline points="560,50.5 564,50.5" fill="none" stroke="#ffffff" stroke-width="1.1"/>
<polyline points="549,53 553,53" fill="none" stroke="#ffffff" stroke-width="1.1"/>
<polyline points="560,53 564,53" fill="none" stroke="#ffffff" stroke-width="1.1"/>
<polyline points="549,55.5 553,55.5" fill="none" stroke="#ffffff" stroke-width="1.1"/>
<polyline points="560,55.5 564,55.5" fill="none" stroke="#ffffff" stroke-width="1.1"/>
<polyline points="549,58 553,58" fill="none" stroke="#ffffff" stroke-width="1.1"/>
<polyline points="560,58 564,58" fill="none" stroke="#ffffff" stroke-width="1.1"/>
<rect x="549" y="47" width="15" height="2" fill="#ffffff"/>
<polyline points="554,50 559,59" fill="none" stroke="#ffffff" stroke-width="1.3"/>
<polyline points="559,50 554,59" fill="none" stroke="#ffffff" stroke-width="1.3"/>
<polyline points="572,50.5 578,50.5" fill="none" stroke="#ffffff" stroke-width="1.1"/>
<polyline points="580,50.5 586,50.5" fill="none" stroke="#ffffff" stroke-width="1.1"/>
<polyline points="572,53 578,53" fill="none" stroke="#ffffff" stroke-width="1.1"/>
<polyline points="580,53 586,53" fill="none" stroke="#ffffff" stroke-width="1.1"/>
<polyline points="572,55.5 578,55.5" fill="none" stroke="#ffffff" stroke-width="1.1"/>
<polyline points="580,55.5 586,55.5" fill="none" stroke="#ffffff" stroke-width="1.1"/>
<polyline points="572,58 578,58" fill="none" stroke="#ffffff" stroke-width="1.1"/>
<polyline points="580,58 586,58" fill="none" stroke="#ffffff" stroke-width="1.1"/>
<rect x="572" y="47" width="7" height="2" fill="#ffffff"/>
<rect x="580" y="47" width="7" height="2" fill="#ffffff"/>
</g>
<g transform="translate(0,0)">
<polyline points="122.8,46.5 126,55.5" fill="none" stroke="#85837d" stroke-width="1.2"/>
<polyline points="126.7,46.5 123.5,55.5" fill="none" stroke="#85837d" stroke-width="1.2"/>
<ellipse cx="122.3" cy="57.5" rx="1.6" ry="2.1" fill="none" stroke="#85837d" stroke-width="1.1"/><ellipse cx="127.2" cy="57.5" rx="1.6" ry="2.1" fill="none" stroke="#85837d" stroke-width="1.1"/>
<rect x="141.5" y="46.5" width="6" height="8" fill="#dedbd4" stroke="#85837d" stroke-width="1.1"/>
<rect x="146.5" y="50.5" width="7" height="8" fill="#dedbd4" stroke="#85837d" stroke-width="1.1"/>
<polyline points="143,49 146,49" fill="none" stroke="#85837d" stroke-width="1"/>
<polyline points="143,51 145,51" fill="none" stroke="#85837d" stroke-width="1"/>
<polyline points="148,53.5 152,53.5" fill="none" stroke="#85837d" stroke-width="1"/>
<polyline points="148,55.5 152,55.5" fill="none" stroke="#85837d" stroke-width="1"/>
<rect x="163.5" y="47.5" width="13" height="11" fill="#85837d"/>
<rect x="167.5" y="46" width="5" height="2.5" fill="#85837d"/>
<path d="M197.5 52.5 A5 4.5 0 1 1 207 55.5" fill="none" stroke="#85837d" stroke-width="1.3"/>
<polygon points="195,49 200,49.5 195.5,54" fill="#85837d"/>
<rect x="195" y="57" width="9" height="1.8" fill="#85837d"/>
<rect x="205" y="57" width="1" height="1.8" fill="#85837d"/>
<rect x="207" y="57" width="1" height="1.8" fill="#85837d"/>
<rect x="209" y="57" width="1" height="1.8" fill="#85837d"/>
<path d="M229.5 52.5 A5 4.5 0 1 0 220 55.5" fill="none" stroke="#85837d" stroke-width="1.3"/>
<polygon points="232,49 227,49.5 231.5,54" fill="#85837d"/>
<rect x="223" y="57" width="9" height="1.8" fill="#85837d"/>
<rect x="217" y="57" width="1" height="1.8" fill="#85837d"/>
<rect x="219" y="57" width="1" height="1.8" fill="#85837d"/>
<rect x="221" y="57" width="1" height="1.8" fill="#85837d"/>
<text x="457" y="59.5" font-family="Liberation Sans,sans-serif" font-weight="bold" font-size="13px" fill="#85837d">U</text>
<text x="466.5" y="58.5" font-family="Liberation Sans,sans-serif" font-size="11px" fill="#85837d">?</text>
<polyline points="485.5,48 485.5,58.5" fill="none" stroke="#85837d" stroke-width="1.2"/>
<polygon points="482.5,51 485.5,47 488.5,51" fill="#85837d"/>
<polygon points="482.5,55.5 485.5,59.5 488.5,55.5" fill="#85837d"/>
<polyline points="495,47.5 492,47.5 492,59 495,59" fill="none" stroke="#85837d" stroke-width="1.3"/>
<polyline points="489,51.5 492,51.5" fill="none" stroke="#85837d" stroke-width="1.2"/>
<polyline points="489,55.5 492,55.5" fill="none" stroke="#85837d" stroke-width="1.2"/>
<text x="503" y="51.5" font-family="Liberation Sans,sans-serif" font-weight="bold" font-size="6px" fill="#85837d">DRC</text>
<polyline points="504,54.5 508,59 518,47.5" fill="none" stroke="#85837d" stroke-width="1.6"/>
<rect x="532.5" y="48.5" width="7" height="10" fill="#dedbd4" stroke="#85837d" stroke-width="1.1"/>
<rect x="527.5" y="50.5" width="8" height="8" fill="#dedbd4" stroke="#85837d" stroke-width="1.1"/>
<text x="528.5" y="57.5" font-family="Liberation Sans,sans-serif" font-weight="bold" font-size="7px" fill="#85837d">N</text>
<polyline points="549,50.5 553,50.5" fill="none" stroke="#85837d" stroke-width="1.1"/>
<polyline points="560,50.5 564,50.5" fill="none" stroke="#85837d" stroke-width="1.1"/>
<polyline points="549,53 553,53" fill="none" stroke="#85837d" stroke-width="1.1"/>
<polyline points="560,53 564,53" fill="none" stroke="#85837d" stroke-width="1.1"/>
<polyline points="549,55.5 553,55.5" fill="none" stroke="#85837d" stroke-width="1.1"/>
<polyline points="560,55.5 564,55.5" fill="none" stroke="#85837d" stroke-width="1.1"/>
<polyline points="549,58 553,58" fill="none" stroke="#85837d" stroke-width="1.1"/>
<polyline points="560,58 564,58" fill="none" stroke="#85837d" stroke-width="1.1"/>
<rect x="549" y="47" width="15" height="2" fill="#85837d"/>
<polyline points="554,50 559,59" fill="none" stroke="#85837d" stroke-width="1.3"/>
<polyline points="559,50 554,59" fill="none" stroke="#85837d" stroke-width="1.3"/>
<polyline points="572,50.5 578,50.5" fill="none" stroke="#85837d" stroke-width="1.1"/>
<polyline points="580,50.5 586,50.5" fill="none" stroke="#85837d" stroke-width="1.1"/>
<polyline points="572,53 578,53" fill="none" stroke="#85837d" stroke-width="1.1"/>
<polyline points="580,53 586,53" fill="none" stroke="#85837d" stroke-width="1.1"/>
<polyline points="572,55.5 578,55.5" fill="none" stroke="#85837d" stroke-width="1.1"/>
<polyline points="580,55.5 586,55.5" fill="none" stroke="#85837d" stroke-width="1.1"/>
<polyline points="572,58 578,58" fill="none" stroke="#85837d" stroke-width="1.1"/>
<polyline points="580,58 586,58" fill="none" stroke="#85837d" stroke-width="1.1"/>
<rect x="572" y="47" width="7" height="2" fill="#85837d"/>
<rect x="580" y="47" width="7" height="2" fill="#85837d"/>
</g>
<rect x="167" y="49" width="6" height="1" fill="#f0f0f0"/>
<rect x="170" y="53.5" width="8" height="5.5" fill="#9a9892" stroke="#fff" stroke-width="1.1"/>
<polyline points="172,56.3 176.5,56.3" fill="none" stroke="#fff" stroke-width="1"/>
<polygon points="357.5,49 365,49 365,59.5 357.5,59.5" fill="#fff6f6"/>
<polyline points="365.5,55 365.5,59.5 357.5,59.5 357.5,49 360.5,49" fill="none" stroke="#7c1212" stroke-width="1.2"/>
<rect x="362.5" y="56.5" width="3" height="3" fill="#fff" stroke="#a01818" stroke-width="1"/>
<circle cx="363.7" cy="50.5" r="3.8" fill="#f2f2f6" stroke="#000" stroke-width="1.3"/>
<polyline points="366.6,53.6 371,58.2" fill="none" stroke="#101098" stroke-width="2.5"/>
<polyline points="367.6,53.8 371.4,57.6" fill="none" stroke="#c0c0ff" stroke-width="0.7" stroke-dasharray="1.2,1.2"/>
<polyline points="361.4,50.5 366,50.5" fill="none" stroke="#000" stroke-width="1.2"/>
<polyline points="363.7,48.2 363.7,52.8" fill="none" stroke="#000" stroke-width="1.2"/>
<polygon points="380.5,49 388,49 388,59.5 380.5,59.5" fill="#fff6f6"/>
<polyline points="388.5,55 388.5,59.5 380.5,59.5 380.5,49 383.5,49" fill="none" stroke="#7c1212" stroke-width="1.2"/>
<rect x="385.5" y="56.5" width="3" height="3" fill="#fff" stroke="#a01818" stroke-width="1"/>
<circle cx="386.7" cy="50.5" r="3.8" fill="#f2f2f6" stroke="#000" stroke-width="1.3"/>
<polyline points="389.6,53.6 394,58.2" fill="none" stroke="#101098" stroke-width="2.5"/>
<polyline points="390.6,53.8 394.4,57.6" fill="none" stroke="#c0c0ff" stroke-width="0.7" stroke-dasharray="1.2,1.2"/>
<polyline points="384.4,50.5 389,50.5" fill="none" stroke="#000" stroke-width="1.2"/>
<rect x="403.5" y="48.5" width="8" height="9.5" fill="none" stroke="#e020c0" stroke-width="1.1" stroke-dasharray="1.5,1.5"/>
<circle cx="409.7" cy="50.5" r="3.8" fill="#f2f2f6" stroke="#000" stroke-width="1.3"/>
<polyline points="412.6,53.6 417,58.2" fill="none" stroke="#101098" stroke-width="2.5"/>
<polyline points="413.6,53.8 417.4,57.6" fill="none" stroke="#c0c0ff" stroke-width="0.7" stroke-dasharray="1.2,1.2"/>
<polygon points="426.5,49 434,49 434,59.5 426.5,59.5" fill="#fff6f6"/>
<polyline points="434.5,55 434.5,59.5 426.5,59.5 426.5,49 429.5,49" fill="none" stroke="#7c1212" stroke-width="1.2"/>
<rect x="431.5" y="56.5" width="3" height="3" fill="#fff" stroke="#a01818" stroke-width="1"/>
<circle cx="432.7" cy="50.5" r="3.8" fill="#f2f2f6" stroke="#000" stroke-width="1.3"/>
<polyline points="435.6,53.6 440,58.2" fill="none" stroke="#101098" stroke-width="2.5"/>
<polyline points="436.6,53.8 440.4,57.6" fill="none" stroke="#c0c0ff" stroke-width="0.7" stroke-dasharray="1.2,1.2"/>
<rect x="430.8" y="48.6" width="3.8" height="3.8" fill="#e8e0e0" stroke="#901414" stroke-width="1.1"/>
<rect x="603" y="47" width="1" height="1" fill="#000"/>
<rect x="603" y="53" width="1" height="1" fill="#000"/>
<rect x="603" y="59" width="1" height="1" fill="#000"/>
<rect x="609" y="47" width="1" height="1" fill="#000"/>
<rect x="609" y="59" width="1" height="1" fill="#000"/>
<rect x="615" y="47" width="1" height="1" fill="#000"/>
<rect x="615" y="53" width="1" height="1" fill="#000"/>
<rect x="615" y="59" width="1" height="1" fill="#000"/>
<polygon points="609,47 609,57 611.3,55 613,58.5 614.5,57.8 612.8,54.5 615.5,54.5" fill="#fff"/>
<polyline points="609.5,47.5 609.5,57 611.3,55 613,58.5 614.5,57.8 612.8,54.5 615.5,54.2 609.5,47.5" fill="none" stroke="#000" stroke-width="1"/>
<rect x="633.5" y="46.5" width="3" height="2" fill="#f0e890" stroke="#000" stroke-width="1.2"/>
<rect x="638.5" y="49.5" width="3" height="2" fill="#f0e890" stroke="#000" stroke-width="1.2"/>
<rect x="638.5" y="53.5" width="3" height="2" fill="#f0e890" stroke="#000" stroke-width="1.2"/>
<rect x="644.5" y="57.5" width="3" height="2" fill="#f0e890" stroke="#000" stroke-width="1.2"/>
<polyline points="635,49 635,54.5 638,54.5" fill="none" stroke="#606060" stroke-width="1"/>
<polyline points="635,50.5 638,50.5" fill="none" stroke="#606060" stroke-width="1"/>
<polyline points="640,56 640,58.5 644,58.5" fill="none" stroke="#606060" stroke-width="1"/>
<text x="668" y="59.5" font-family="Liberation Sans,sans-serif" font-weight="bold" font-size="14.5px" fill="#f0e820" stroke="#000" stroke-width="1.1" paint-order="stroke">?</text>
</g>
<g shape-rendering="auto">
<polygon points="1005,82.3 1012,83.8 1010.3,85.5 1015.2,90.4 1013.3,92.3 1008.4,87.4 1006.6,89.2" fill="#000"/>
<path d="M1005.5 105.5 h5 l3 3 l-3 3 h-5 z" fill="#d8d8f0" stroke="#1010c0" stroke-width="1.2"/>
<polyline points="1002,107 1005.5,107" fill="none" stroke="#1010c0" stroke-width="1.1"/>
<polyline points="1002,110 1005.5,110" fill="none" stroke="#1010c0" stroke-width="1.1"/>
<polyline points="1013.5,108.5 1016.5,108.5" fill="none" stroke="#1010c0" stroke-width="1.1"/>
<polyline points="1002,125.5 1009.5,125.5 1009.5,135.5 1016,135.5" fill="none" stroke="#000" stroke-width="1.1"/>
<text x="1003.5" y="154" font-family="Liberation Sans,sans-serif" font-weight="bold" font-size="8.5px" fill="#1414b4">N1</text>
<rect x="1002" y="155" width="14" height="1" fill="#000" shape-rendering="crispEdges"/>
<polyline points="1002,169.5 1009.5,169.5 1009.5,179 1016,179" fill="none" stroke="#000" stroke-width="2.8"/>
<polyline points="1002,196.5 1015,196.5" fill="none" stroke="#b070b0" stroke-width="1"/>
<polyline points="1008.5,190 1008.5,203" fill="none" stroke="#b070b0" stroke-width="1"/>
<polygon points="1008.5,193.5 1011.5,196.5 1008.5,199.5 1005.5,196.5" fill="#c018a8"/>
<polyline points="1006,222 1012,215.5" fill="none" stroke="#c02020" stroke-width="1"/>
<polyline points="1013,212 1013,225" fill="none" stroke="#000" stroke-width="1.8"/>
<text x="1001.5" y="239" font-family="Liberation Sans,sans-serif" font-weight="bold" font-size="7px" fill="#901414" textLength="14.5" lengthAdjust="spacingAndGlyphs">PWR</text>
<circle cx="1009" cy="242.5" r="1.9" fill="none" stroke="#000" stroke-width="1.1"/>
<polyline points="1009,244.5 1009,247.3" fill="none" stroke="#000" stroke-width="1.1"/>
<text x="1001.8" y="261" font-family="Liberation Sans,sans-serif" font-weight="bold" font-size="7px" fill="#108088" textLength="14" lengthAdjust="spacingAndGlyphs">GND</text>
<polyline points="1008.5,262 1008.5,264.5" fill="none" stroke="#000" stroke-width="1.1"/>
<polyline points="1003,264.5 1014,264.5" fill="none" stroke="#000" stroke-width="1.1"/>
<polyline points="1005,266.7 1012,266.7" fill="none" stroke="#000" stroke-width="1.1"/>
<polyline points="1007,268.8 1010,268.8" fill="none" stroke="#000" stroke-width="1.1"/>
<rect x="1002.5" y="278.5" width="13" height="12" fill="#b4e6b4" stroke="#101810" stroke-width="1.3"/>
<rect x="1004" y="280.5" width="2.5" height="2.5" fill="#107028"/>
<rect x="1004" y="286" width="2.5" height="2.5" fill="#107028"/>
<rect x="1011" y="280.5" width="2.5" height="2.5" fill="#107028"/>
<rect x="1011" y="286" width="2.5" height="2.5" fill="#107028"/>
<path d="M1002.5 306.5 l3.5 -3 h5 v6 h-5 z" fill="#f0d0d0" stroke="#901010" stroke-width="1.2"/>
<text transform="translate(1011.6,310) scale(0.68,1)" font-family="Liberation Sans,sans-serif" font-weight="bold" font-size="10px" fill="#000">P</text>
<path d="M1010 322.5 h-8.5 v13 h8.5" fill="none" stroke="#f4f4f2" stroke-dasharray="2,1"/>
<path d="M1002.5 329 l3 -3.5 h3 l2.5 3.5 l-2.5 3.5 h-3 z" fill="#a4a29c" stroke="#87857f" stroke-width="0.8"/>
<text transform="translate(1012.6,334) scale(0.68,1)" font-family="Liberation Sans,sans-serif" font-size="10px" fill="#fff">H</text>
<text transform="translate(1011.8,333.2) scale(0.68,1)" font-family="Liberation Sans,sans-serif" font-size="10px" fill="#87857f">H</text>
<polyline points="1006,346.5 1002,350.3 1006,354" fill="none" stroke="#18187a" stroke-width="1.1"/>
<polyline points="1010,346.5 1006,350.3 1010,354" fill="none" stroke="#18187a" stroke-width="1.1"/>
<text transform="translate(1010.8,354) scale(0.66,1)" font-family="Liberation Sans,sans-serif" font-weight="bold" font-size="10px" fill="#000">C</text>
<polyline points="1002.5,366 1002.5,378.5" fill="none" stroke="#1010c0" stroke-width="1.4"/>
<polyline points="1003,372.3 1008,372.3" fill="none" stroke="#c02020" stroke-width="1.2"/>
<polyline points="1006,368 1015,378" fill="none" stroke="#10a818" stroke-width="1.3"/>
<polyline points="1015,368 1006,378" fill="none" stroke="#10a818" stroke-width="1.3"/>
<polyline points="1002,396 1012,403.7" fill="none" stroke="#000" stroke-width="1.1"/>
<polygon points="1011.5,403.5 1016.5,401.6 1017,403.5 1012.5,405.5" fill="#e8e028"/>
<polygon points="1003.5,416.5 1008,414 1009,417.5 1005.5,419" fill="#e8e028"/>
<polyline points="1003.1,417.5 1006.8,420.4 1003.1,423.3 1006.3,426.3 1014.5,418.1" fill="none" stroke="#000" stroke-width="1.1"/>
<rect x="1002.5" y="437.5" width="13" height="12" fill="none" stroke="#000" stroke-width="1.3"/>
<ellipse cx="1008.8" cy="465.3" rx="6" ry="4" fill="none" stroke="#000" stroke-width="1.2"/>
<path d="M1005 481.5 h3.5 a5.5 6 0 0 1 0 12 h-3.5" fill="none" stroke="#000" stroke-width="1.2"/>
<text x="1002.8" y="514.8" font-family="Liberation Serif,serif" font-size="18px" fill="#9090e8" stroke="#1818c0" stroke-width="0.9">A</text>
</g>
</svg>
</body></html>
